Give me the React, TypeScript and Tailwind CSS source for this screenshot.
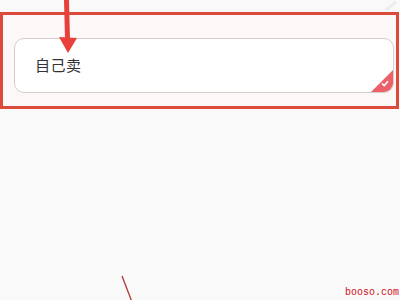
import React from 'react';

export default function App() {
  return (
    <div className="relative w-[400px] h-[300px] overflow-hidden bg-[#f9f9f9] font-['Noto_Sans_CJK_SC',sans-serif]">
      <div className="h-[12px]" />

      {/* highlighted field */}
      <div className="ml-[0px] w-[399px] h-[97px] border-[3px] border-[#dc4a3c] bg-[#fcf8f8] px-[11px] pt-[23px]">
        <div className="relative h-[55px] w-[380px] overflow-hidden rounded-[10px] border border-[#d6cccc] bg-white flex items-center pl-[20px]">
          <span className="text-[15px] text-[#333] tracking-[0.5px]">自己卖</span>
          <div className="absolute right-0 bottom-0 w-[22px] h-[22px] bg-[#ec6169] [clip-path:polygon(100%_0,100%_100%,0_100%)]">
            <svg className="absolute right-[4px] bottom-[5px]" width="8" height="7" viewBox="0 0 8 7">
              <path d="M1 3.5 L3.2 5.6 L7 1.2" fill="none" stroke="white" strokeWidth="1.6" />
            </svg>
          </div>
        </div>
      </div>

      {/* pointer arrow */}
      <svg className="absolute left-0 top-0" width="100" height="60" viewBox="0 0 100 60">
        <path d="M64 0 L69 0 L70 39 L65 39 Z" fill="#e8403a" />
        <path d="M59 37 L77 38 L68 53 Z" fill="#e8403a" />
      </svg>

      {/* faint mark top right */}
      <svg className="absolute right-0 top-0" width="30" height="30" viewBox="0 0 30 30">
        <path d="M16 10 L26 2" stroke="#ececec" strokeWidth="3" />
      </svg>

      {/* stray line at bottom */}
      <svg className="absolute left-[118px] top-[272px]" width="20" height="30" viewBox="0 0 20 30">
        <path d="M4 4 L14 30" stroke="#b0343a" strokeWidth="1.3" />
      </svg>

      <span className="absolute right-[1px] bottom-[2px] font-['Liberation_Mono',monospace] text-[10px] leading-none text-[#d0101a]">
        booso.com
      </span>
    </div>
  );
}
